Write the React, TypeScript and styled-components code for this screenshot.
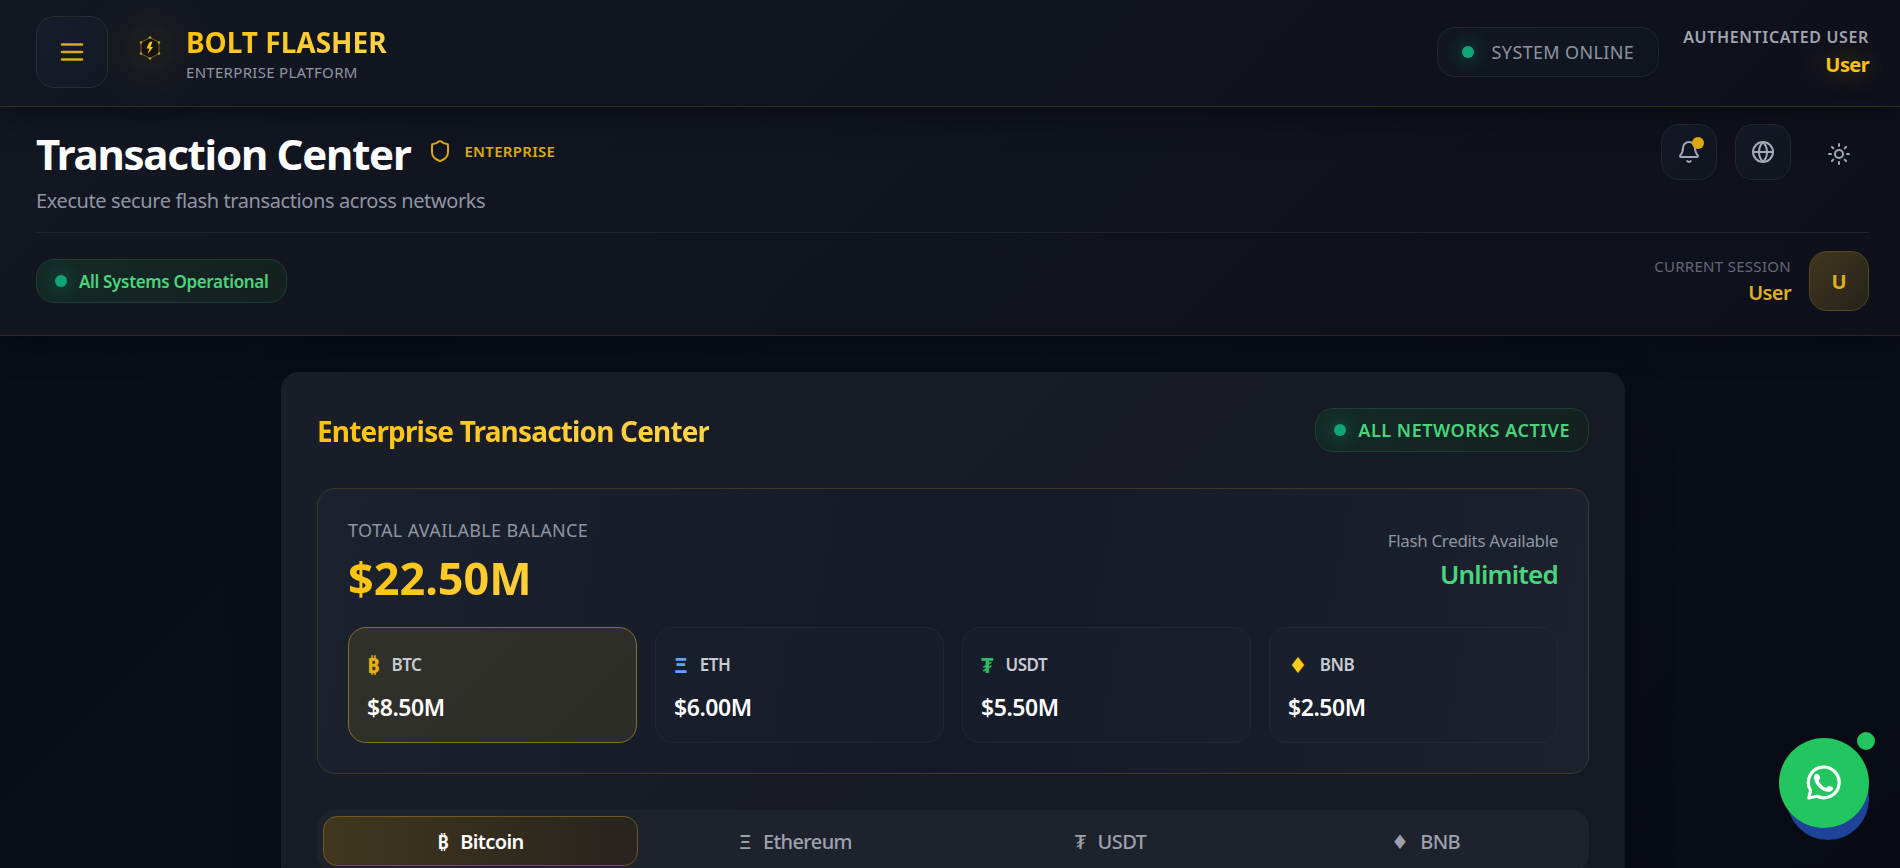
import React from 'react';
import styled, { createGlobalStyle, css } from 'styled-components';
import { Shield, Bell, Globe, Sun } from 'lucide-react';

const GlobalStyle = createGlobalStyle`
  * { box-sizing: border-box; }
  body {
    margin: 0;
    background: #090c16;
    color: #fff;
    font-family: "Segoe UI", "Noto Sans", "Open Sans", "DejaVu Sans", sans-serif;
    font-size: 18px;
    line-height: 27px;
  }
  h1, h2, p { margin: 0; }
  button { font: inherit; color: inherit; cursor: pointer; }
`;

const Page = styled.div`
  height: 100vh;
  overflow-y: auto;
  scrollbar-width: none;
  background: linear-gradient(135deg, #080c17 0%, #0b0f1a 50%, #080b15 100%);
`;

const Row = styled.div<{ $gap?: number; $top?: boolean }>`
  display: flex;
  align-items: ${(p) => (p.$top ? 'flex-start' : 'center')};
  gap: ${(p) => p.$gap ?? 0}px;
`;

const TopBar = styled.header`
  position: relative;
  display: flex;
  align-items: center;
  justify-content: space-between;
  height: 107px;
  padding: 0 31px 2px 36px;
  background: linear-gradient(135deg, #131722 0%, #10131e 60%, #0e111c 100%);
  border-bottom: 1px solid #322e1f;
  box-shadow: 0 8px 32px rgba(0, 0, 0, 0.4);
`;

const SquareButton = styled.button<{ $size: number; $tone?: 'gold' | 'plain' }>`
  position: relative;
  display: flex;
  align-items: center;
  justify-content: center;
  width: ${(p) => p.$size}px;
  height: ${(p) => p.$size}px;
  padding: 0;
  border-radius: 18px;
  border: 1px solid
    ${(p) => (p.$tone === 'plain' ? 'transparent' : p.$tone === 'gold' ? '#292c33' : '#22262b')};
  background: ${(p) =>
    p.$tone === 'plain'
      ? 'transparent'
      : p.$tone === 'gold'
        ? 'linear-gradient(135deg, #171d2b, #131824)'
        : 'linear-gradient(135deg, #131924, #10151f)'};
  color: ${(p) => (p.$tone === 'gold' ? '#d9ac1c' : '#a4a9b5')};
`;

const Badge = styled.span`
  position: absolute;
  top: 12px;
  right: 12px;
  width: 12px;
  height: 12px;
  border-radius: 50%;
  background: #dba909;
`;

const LogoBox = styled.span`
  display: flex;
  align-items: center;
  justify-content: center;
  width: 48px;
  height: 48px;
  margin: 0 12px 8px 18px;
  border-radius: 50%;
  background: rgba(234, 179, 8, 0.04);
  box-shadow: 0 0 48px 24px rgba(234, 179, 8, 0.04);
`;

const Brand = styled.div`
  display: flex;
  flex-direction: column;
  padding-top: 4px;
`;

const goldText = css`
  background: linear-gradient(135deg, #ffc107 0%, #ffd54f 100%);
  background-clip: text;
  -webkit-background-clip: text;
  color: transparent;
`;

const BrandName = styled.span`
  font-size: 28px;
  line-height: 36px;
  font-weight: 700;
  ${goldText}
`;

const Caption = styled.span<{ $color?: string; $strong?: boolean; $wide?: boolean }>`
  font-size: ${(p) => (p.$wide ? 16 : 15)}px;
  line-height: ${(p) => (p.$wide ? 26 : 24)}px;
  font-weight: ${(p) => (p.$strong ? 600 : 400)};
  letter-spacing: ${(p) => (p.$wide ? '0.04em' : '0.02em')};
  text-transform: uppercase;
  color: ${(p) => p.$color ?? '#9097a3'};
`;

const Dot = styled.span`
  flex: none;
  width: 12px;
  height: 12px;
  border-radius: 50%;
  background: #10a575;
  box-shadow: 0 0 18px 2px rgba(16, 185, 129, 0.35);
`;

const OnlinePill = styled.div`
  display: flex;
  align-items: center;
  gap: 18px;
  height: 50px;
  padding: 0 24px;
  border: 1px solid #22262d;
  border-radius: 18px;
  background: linear-gradient(135deg, #121722, #10141e);
  color: #8d94a1;
  letter-spacing: 0.02em;
`;

const GreenPill = styled.div<{ $upper?: boolean }>`
  display: flex;
  align-items: center;
  gap: 12px;
  height: 44px;
  padding: 0 18px;
  border: 1px solid #1d4036;
  border-radius: 18px;
  background: linear-gradient(135deg, #142a27, #14201f);
  color: #4ad47c;
  font-weight: 600;
  font-size: ${(p) => (p.$upper ? 18 : 17)}px;
  letter-spacing: ${(p) => (p.$upper ? '0.03em' : '-0.02em')};
  text-transform: ${(p) => (p.$upper ? 'uppercase' : 'none')};
`;

const Identity = styled.div`
  display: flex;
  flex-direction: column;
  align-items: flex-end;
`;

const UserName = styled.span<{ $glow?: boolean }>`
  font-size: 20px;
  line-height: 30px;
  font-weight: ${(p) => (p.$glow ? 700 : 600)};
  letter-spacing: -0.03em;
  color: ${(p) => (p.$glow ? '#fcc211' : '#dfaf1b')};
  text-shadow: ${(p) => (p.$glow ? '0 0 30px rgba(255, 193, 7, 0.5)' : 'none')};
`;

const PageHead = styled.section`
  padding: 17px 31px 24px 36px;
  background: linear-gradient(135deg, #131722 0%, #10131e 60%, #0e111b 100%);
  border-bottom: 1px solid #2c2a20;
  box-shadow: 0 8px 32px rgba(0, 0, 0, 0.3);
`;

const HeadRow = styled.div`
  display: flex;
  align-items: flex-start;
  justify-content: space-between;
  height: 109px;
  border-bottom: 1px solid #22242b;
`;

const SessionRow = styled.div`
  display: flex;
  align-items: center;
  justify-content: space-between;
  padding-top: 18px;
`;

const PageTitle = styled.h1`
  font-size: 42px;
  line-height: 60px;
  font-weight: 700;
  letter-spacing: -0.03em;
`;

const Level = styled.div`
  display: flex;
  align-items: center;
  gap: 12px;
  height: 54px;
`;

const Lead = styled.p`
  padding-top: 2px;
  font-size: 20px;
  line-height: 30px;
  letter-spacing: -0.02em;
  color: #8f95a2;
`;

const Avatar = styled.span`
  display: flex;
  align-items: center;
  justify-content: center;
  width: 60px;
  height: 60px;
  border: 1px solid #54481f;
  border-radius: 18px;
  background: linear-gradient(135deg, #40371d, #26221b);
  color: #dfaf1b;
  font-size: 20px;
  font-weight: 700;
`;

const Content = styled.div`
  padding: 36px 30px 0 36px;
`;

const Card = styled.main`
  max-width: 1344px;
  margin: 0 auto;
  padding: 36px;
  border-radius: 18px;
  background: linear-gradient(135deg, #1a1e29 0%, #181b25 50%, #151922 100%);
  box-shadow: 0 16px 48px rgba(0, 0, 0, 0.3);
`;

const CardHead = styled.div`
  display: flex;
  align-items: flex-start;
  justify-content: space-between;
  height: 80px;
`;

const CardTitle = styled.h2`
  font-size: 28px;
  line-height: 46px;
  font-weight: 700;
  letter-spacing: -0.03em;
  ${goldText}
`;

const Balance = styled.section`
  padding: 30px;
  border: 1px solid #3c392b;
  border-radius: 18px;
  background: linear-gradient(100deg, #1b222e 0%, #141a27 50%, #1b222d 100%);
`;

const BalanceHead = styled.div`
  display: flex;
  align-items: center;
  justify-content: space-between;
  height: 108px;
  padding-bottom: 26px;
`;

const Total = styled.div`
  display: flex;
  flex-direction: column;
  padding-top: 9px;
`;

const Amount = styled.span`
  font-size: 45px;
  line-height: 68px;
  font-weight: 700;
  ${goldText}
`;

const Muted = styled.span<{ $upper?: boolean }>`
  font-size: ${(p) => (p.$upper ? 18 : 17)}px;
  line-height: 27px;
  letter-spacing: ${(p) => (p.$upper ? '0.02em' : '-0.02em')};
  text-transform: ${(p) => (p.$upper ? 'uppercase' : 'none')};
  color: #8f95a2;
`;

const Unlimited = styled.span`
  font-size: 26px;
  line-height: 40px;
  font-weight: 600;
  letter-spacing: -0.03em;
  color: #4ad47c;
`;

const Tiles = styled.div`
  display: grid;
  grid-template-columns: repeat(4, 1fr);
  gap: 18px;
`;

const Tile = styled.button<{ $active?: boolean }>`
  display: flex;
  flex-direction: column;
  gap: 12px;
  height: 116px;
  padding: 21px 18px;
  text-align: left;
  border: 1px solid ${(p) => (p.$active ? '#83702a' : '#222832')};
  border-radius: 18px;
  background: ${(p) => (p.$active ? 'linear-gradient(135deg, #31312c, #2c2c28)' : 'rgba(26, 32, 46, 0.6)')};
`;

const Symbol = styled.span<{ $color?: string }>`
  font-size: 22px;
  line-height: 30px;
  font-weight: 700;
  color: ${(p) => p.$color};
`;

const Ticker = styled.span`
  font-size: 17px;
  font-weight: 600;
  letter-spacing: -0.03em;
  color: #c9ccd2;
`;

const TileValue = styled.span`
  font-size: 23px;
  line-height: 32px;
  font-weight: 600;
  letter-spacing: -0.02em;
`;

const Tabs = styled.div`
  display: grid;
  grid-template-columns: repeat(4, 1fr);
  margin-top: 36px;
  padding: 6px;
  border-radius: 18px;
  background: #1e222d;
`;

const Tab = styled.button<{ $active?: boolean }>`
  display: flex;
  align-items: center;
  justify-content: center;
  gap: 12px;
  height: 50px;
  padding: 0;
  border: 1px solid ${(p) => (p.$active ? '#6c5a20' : 'transparent')};
  border-radius: 14px;
  background: ${(p) => (p.$active ? 'linear-gradient(90deg, #40371d, #28241f)' : 'transparent')};
  color: ${(p) => (p.$active ? '#fff' : '#9ca1ac')};
  font-size: 20px;
  font-weight: ${(p) => (p.$active ? 600 : 500)};
  letter-spacing: -0.03em;
`;

const FabShadow = styled.span`
  position: fixed;
  right: 31px;
  bottom: 28px;
  width: 82px;
  height: 82px;
  border-radius: 50%;
  background: #1e4499;
`;

const Fab = styled.button`
  position: fixed;
  right: 31px;
  bottom: 40px;
  display: flex;
  align-items: center;
  justify-content: center;
  width: 90px;
  height: 90px;
  padding: 0;
  border: 0;
  border-radius: 50%;
  background: #22c55e;
  color: #fff;
`;

const FabDot = styled.span`
  position: absolute;
  top: -6px;
  right: -6px;
  width: 18px;
  height: 18px;
  border-radius: 50%;
  background: #22c55e;
`;

const MenuIcon = () => (
  <svg width="30" height="30" viewBox="0 0 24 24" fill="none" stroke="currentColor" strokeWidth="2" strokeLinecap="round" aria-hidden="true">
    <path d="M4 6h16M4 12h16M4 18h16" />
  </svg>
);

const Logo = () => (
  <svg width="22" height="24" viewBox="0 0 22 24" aria-hidden="true">
    <path d="M11 1.5 L20 6.5 V17.5 L11 22.5 L2 17.5 V6.5 Z" fill="#15150f" stroke="#7a621b" />
    <path d="M13.5 5.5 L10.5 6 L7.5 12.5 H10.5 L8.5 18.5 L14 11 H11.5 Z" fill="#ffc21c" />
    {[[11, 1.5], [20, 6.5], [20, 17.5], [11, 22.5], [2, 17.5], [2, 6.5]].map(([x, y]) => (
      <circle key={`${x}-${y}`} cx={x} cy={y} r="1.2" fill="#c99a1e" />
    ))}
  </svg>
);

const WhatsappIcon = () => (
  <svg width="36" height="36" viewBox="0 0 36 36" aria-hidden="true">
    <path
      d="M2.8 33 L4.6 25.5 A15.4 15.4 0 1 1 11 31.3 Z"
      fill="none"
      stroke="currentColor"
      strokeWidth="3.2"
      strokeLinejoin="round"
    />
    <path
      d="M11 8.7 C9 8.5 7.6 10.8 7.9 13 C8.6 19.5 16 27 22.5 26.8 C25.3 26.7 27.5 24.8 27.2 23 C27 21.9 24 20.7 22.8 20.9 C21.5 21.1 21 23.2 19.8 22.7 C17 21.7 14 18.8 13 16.2 C12.7 15 14.3 14.3 14.2 12.8 C14.1 11.5 12.8 8.9 11 8.7 Z"
      fill="currentColor"
    />
  </svg>
);

const coins = [
  { symbol: '₿', ticker: 'BTC', name: 'Bitcoin', value: '$8.50M', color: '#e3b013' },
  { symbol: 'Ξ', ticker: 'ETH', name: 'Ethereum', value: '$6.00M', color: '#60a5fa' },
  { symbol: '₮', ticker: 'USDT', name: 'USDT', value: '$5.50M', color: '#2bbd60' },
  { symbol: '♦', ticker: 'BNB', name: 'BNB', value: '$2.50M', color: '#facc15' },
];

export default function App() {
  return (
    <>
      <GlobalStyle />
      <Page>
        <TopBar>
          <Row>
            <SquareButton $size={72} $tone="gold" aria-label="Open menu">
              <MenuIcon />
            </SquareButton>
            <LogoBox><Logo /></LogoBox>
            <Brand>
              <BrandName>BOLT FLASHER</BrandName>
              <Caption>Enterprise Platform</Caption>
            </Brand>
          </Row>
          <Row $gap={24}>
            <OnlinePill><Dot />SYSTEM ONLINE</OnlinePill>
            <Identity>
              <Caption $strong $wide $color="#a0a5b0">Authenticated User</Caption>
              <UserName $glow>User</UserName>
            </Identity>
          </Row>
        </TopBar>

        <PageHead>
          <HeadRow>
            <div>
              <Row $gap={18} $top>
                <PageTitle>Transaction Center</PageTitle>
                <Level>
                  <Shield size={24} color="#dba91a" />
                  <Caption $strong $color="#dba91a">Enterprise</Caption>
                </Level>
              </Row>
              <Lead>Execute secure flash transactions across networks</Lead>
            </div>
            <Row $gap={18} $top>
              <SquareButton $size={56} aria-label="Notifications"><Bell size={24} strokeWidth={2} /><Badge /></SquareButton>
              <SquareButton $size={56} aria-label="Language"><Globe size={24} strokeWidth={2} /></SquareButton>
              <SquareButton $size={60} $tone="plain" aria-label="Theme"><Sun size={24} strokeWidth={2} /></SquareButton>
            </Row>
          </HeadRow>
          <SessionRow>
            <GreenPill><Dot />All Systems Operational</GreenPill>
            <Row $gap={18}>
              <Identity>
                <Caption $color="#636976">Current Session</Caption>
                <UserName>User</UserName>
              </Identity>
              <Avatar>U</Avatar>
            </Row>
          </SessionRow>
        </PageHead>

        <Content>
          <Card>
            <CardHead>
              <CardTitle>Enterprise Transaction Center</CardTitle>
              <GreenPill $upper><Dot />All Networks Active</GreenPill>
            </CardHead>
            <Balance>
              <BalanceHead>
                <Total>
                  <Muted $upper>Total Available Balance</Muted>
                  <Amount>$22.50M</Amount>
                </Total>
                <Identity>
                  <Muted>Flash Credits Available</Muted>
                  <Unlimited>Unlimited</Unlimited>
                </Identity>
              </BalanceHead>
              <Tiles>
                {coins.map((c, i) => (
                  <Tile key={c.ticker} $active={i === 0}>
                    <Row $gap={12}>
                      <Symbol $color={c.color}>{c.symbol}</Symbol>
                      <Ticker>{c.ticker}</Ticker>
                    </Row>
                    <TileValue>{c.value}</TileValue>
                  </Tile>
                ))}
              </Tiles>
            </Balance>
            <Tabs role="tablist">
              {coins.map((c, i) => (
                <Tab key={c.ticker} role="tab" aria-selected={i === 0} $active={i === 0}>
                  <span>{c.symbol}</span>
                  <span>{c.name}</span>
                </Tab>
              ))}
            </Tabs>
          </Card>
        </Content>
      </Page>
      <FabShadow />
      <Fab aria-label="Chat on WhatsApp">
        <WhatsappIcon />
        <FabDot />
      </Fab>
    </>
  );
}
